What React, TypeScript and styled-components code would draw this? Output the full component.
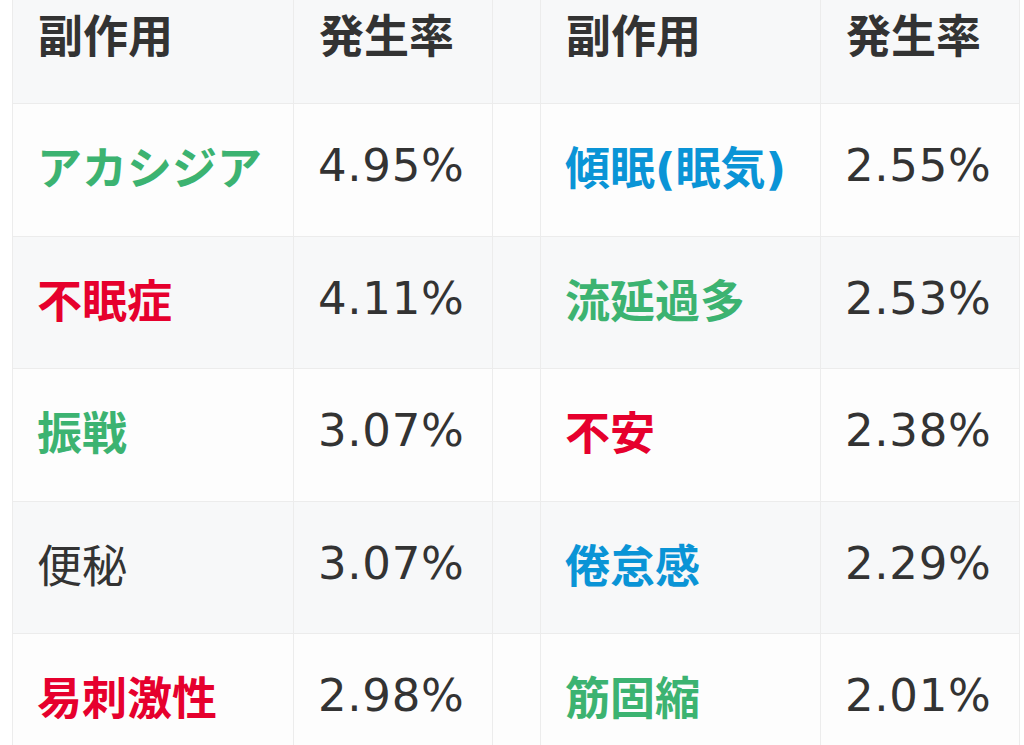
import React from 'react';
import styled, { createGlobalStyle } from 'styled-components';

type Tone = 'green' | 'red' | 'blue' | 'plain';

interface Effect {
  name: string;
  rate: string;
  tone: Tone;
}

const leftSide: Effect[] = [
  { name: 'アカシジア', rate: '4.95%', tone: 'green' },
  { name: '不眠症', rate: '4.11%', tone: 'red' },
  { name: '振戦', rate: '3.07%', tone: 'green' },
  { name: '便秘', rate: '3.07%', tone: 'plain' },
  { name: '易刺激性', rate: '2.98%', tone: 'red' },
];

const rightSide: Effect[] = [
  { name: '傾眠(眠気)', rate: '2.55%', tone: 'blue' },
  { name: '流延過多', rate: '2.53%', tone: 'green' },
  { name: '不安', rate: '2.38%', tone: 'red' },
  { name: '倦怠感', rate: '2.29%', tone: 'blue' },
  { name: '筋固縮', rate: '2.01%', tone: 'green' },
];

const toneColor: Record<Tone, string> = {
  green: '#3cb371',
  red: '#e6002d',
  blue: '#0a94d6',
  plain: '#333333',
};

const App = () => {
  return (
    <>
      <GlobalStyle />
      <Page>
        <Table>
          <colgroup>
            <col style={{ width: 281 }} />
            <col style={{ width: 199 }} />
            <col style={{ width: 48 }} />
            <col style={{ width: 280 }} />
            <col style={{ width: 199 }} />
          </colgroup>
          <thead>
            <HeadRow>
              <HeadCell>副作用</HeadCell>
              <HeadCell>発生率</HeadCell>
              <HeadCell />
              <HeadCell>副作用</HeadCell>
              <HeadCell>発生率</HeadCell>
            </HeadRow>
          </thead>
          <tbody>
            {leftSide.map((left, i) => {
              const right = rightSide[i];
              return (
                <Row key={left.name} striped={i % 2 === 1}>
                  <NameCell tone={left.tone}>{left.name}</NameCell>
                  <RateCell>{left.rate}</RateCell>
                  <Cell />
                  <NameCell tone={right.tone}>{right.name}</NameCell>
                  <RateCell>{right.rate}</RateCell>
                </Row>
              );
            })}
          </tbody>
        </Table>
      </Page>
    </>
  );
};

export default App;

const GlobalStyle = createGlobalStyle`
  html, body {
    margin: 0;
    padding: 0;
    background: #ffffff;
    overflow: hidden;
  }
`;

const Page = styled.div`
  width: 1024px;
  height: 745px;
  overflow: hidden;
  padding-left: 12px;
  box-sizing: border-box;
`;

const Table = styled.table`
  margin-top: -29px;
  width: 1007px;
  table-layout: fixed;
  border-collapse: collapse;
  font-family: 'DejaVu Sans', 'Noto Sans CJK JP', sans-serif;
  font-size: 45px;
  color: #333333;
`;

const HeadRow = styled.tr`
  height: 132px;
  background: #f7f8f9;
`;

const Row = styled.tr<{ striped: boolean }>`
  height: 132.5px;
  background: ${({ striped }) => (striped ? '#f7f8f9' : '#fdfdfd')};
`;

const Cell = styled.td`
  border: 1px solid #ececec;
  padding: 0 0 8px 24px;
  vertical-align: middle;
  white-space: nowrap;
`;

const HeadCell = styled.th`
  border: 1px solid #ececec;
  padding: 0 0 9px 25px;
  vertical-align: middle;
  text-align: left;
  font-weight: 700;
  white-space: nowrap;
`;

const NameCell = styled(Cell)<{ tone: Tone }>`
  color: ${({ tone }) => toneColor[tone]};
  font-weight: ${({ tone }) => (tone === 'plain' ? 400 : 700)};
`;

const RateCell = styled(Cell)`
  color: #333333;
  letter-spacing: 0.7px;
`;
